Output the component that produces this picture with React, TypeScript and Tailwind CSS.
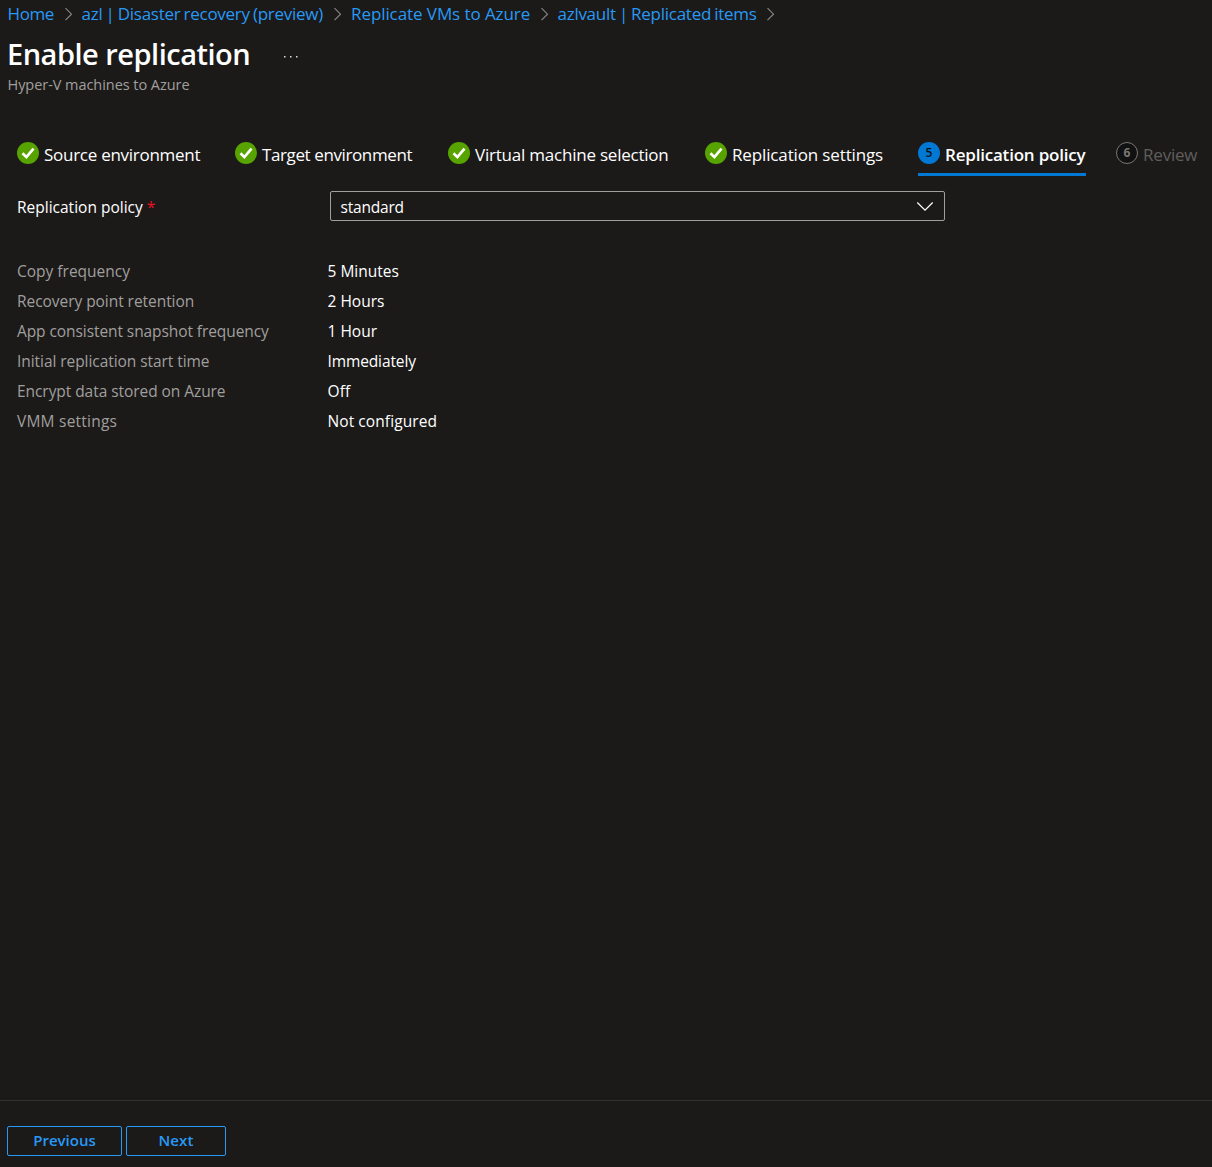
const crumbs = [
  { text: "Home", box: "w-[74px]", track: "tracking-[-0.4px]" },
  { text: "azl | Disaster recovery (preview)", box: "w-[269.5px]", track: "tracking-[-0.27px] [word-spacing:-1px]" },
  { text: "Replicate VMs to Azure", box: "w-[206.5px]", track: "tracking-[-0.08px]" },
  { text: "azlvault | Replicated items", box: "w-[226px]", track: "tracking-[-0.27px] [word-spacing:-1px]" },
];

const steps = [
  { text: "Source environment", state: "done", box: "w-[218px]", track: "tracking-[-0.27px]" },
  { text: "Target environment", state: "done", box: "w-[213px]", track: "tracking-[-0.39px]" },
  { text: "Virtual machine selection", state: "done", box: "w-[257px]", track: "tracking-[-0.22px]" },
  { text: "Replication settings", state: "done", box: "w-[213px]", track: "tracking-[-0.14px]" },
  { text: "Replication policy", state: "current", box: "w-[198px]", track: "tracking-[-0.2px]" },
  { text: "Review", state: "todo", box: "w-[90px]", track: "tracking-[-0.2px]" },
];

const details = [
  { label: "Copy frequency", value: "5 Minutes", lt: "", vt: "" },
  { label: "Recovery point retention", value: "2 Hours", lt: "tracking-[-0.05px]", vt: "" },
  { label: "App consistent snapshot frequency", value: "1 Hour", lt: "tracking-[-0.08px]", vt: "" },
  { label: "Initial replication start time", value: "Immediately", lt: "tracking-[-0.06px]", vt: "tracking-[-0.12px]" },
  { label: "Encrypt data stored on Azure", value: "Off", lt: "tracking-[-0.06px]", vt: "tracking-[0.1px]" },
  { label: "VMM settings", value: "Not configured", lt: "tracking-[0.22px]", vt: "tracking-[0.08px]" },
];

function Check() {
  return (
    <svg width="22" height="22" viewBox="0 0 22 22" className="shrink-0">
      <circle cx="11" cy="11" r="11" fill="#57a300" />
      <path d="M5.5 11.2 9.4 15.1 16.5 6.6" fill="none" stroke="#fff" strokeWidth="2.7" />
    </svg>
  );
}

function Step({ text, state, box, track }: (typeof steps)[number]) {
  const current = state === "current";
  return (
    <div className={`${box} shrink-0`}>
      <div className={`flex h-[34px] items-start ${current ? "w-[168px] border-b-[3px] border-[#0078d4]" : ""}`}>
        {state === "done" && <Check />}
        {current && (
          <span className="flex size-[22px] shrink-0 justify-center rounded-full bg-[#0078d4] text-[12px] leading-[21px] font-semibold text-[#111]">5</span>
        )}
        {state === "todo" && (
          <span className="flex size-[22px] shrink-0 justify-center rounded-full border border-[#797775] bg-[#111] text-[12px] leading-[19px] font-bold text-[#797775]">6</span>
        )}
        <span className={`ml-[5px] whitespace-nowrap text-[17px] leading-[26px] ${track} ${current ? "font-semibold" : ""} ${state === "todo" ? "text-[#605e5c]" : "text-white"}`}>
          {text}
        </span>
      </div>
    </div>
  );
}

export default function App() {
  return (
    <div className="flex h-[1167px] w-[1212px] flex-col overflow-hidden bg-[#1b1a19] font-['Open_Sans','Noto_Sans',sans-serif] text-white">
      <nav className="flex h-7 shrink-0 pl-[7.5px] text-[17px] leading-[28px] text-[#2899f5]">
        {crumbs.map((c) => (
          <div key={c.text} className={`${c.box} flex shrink-0 justify-between whitespace-nowrap`}>
            <a className={c.track}>{c.text}</a>
            <svg width="8" height="14" viewBox="0 0 8 14" className="mt-[7px] mr-[9px] shrink-0" fill="none" stroke="#8a8886" strokeWidth="1.1">
              <path d="M.5 1.2 6.5 7.2.5 13.2" />
            </svg>
          </div>
        ))}
      </nav>
      <header className="flex h-[68px] shrink-0 flex-col pl-[7px]">
        <div className="flex h-[46px] items-center">
          <h1 className="w-[276px] pt-[5px] text-[29px] leading-[40px] font-semibold tracking-[-0.5px]">Enable replication</h1>
          <svg width="16" height="4" viewBox="0 0 16 4" className="mt-[11px]" fill="#e1dfdd">
            <rect x="1" y="1" width="1.5" height="1.5" />
            <rect x="7" y="1" width="1.5" height="1.5" />
            <rect x="13" y="1" width="1.5" height="1.5" />
          </svg>
        </div>
        <p className="pl-[0.5px] text-[14.5px] leading-[22px] tracking-[-0.05px] text-[#a19f9d]">Hyper-V machines to Azure</p>
      </header>
      <div className="mt-[46px] flex shrink-0 pl-[17px]">
        {steps.map((s) => (
          <Step key={s.text} {...s} />
        ))}
      </div>
      <main className="flex-1 pl-[17px] text-[15.5px]">
        <div className="mt-[15px] flex h-[30px] items-center">
          <label className="w-[313px] pt-[2px] leading-[30px]">
            Replication policy <span className="text-[#e81123]">*</span>
          </label>
          <div className="flex h-[30px] w-[615px] items-center justify-between rounded-[2px] border border-[#a19f9d] pr-[10px] pl-[9.5px]">
            <span className="pt-[3px] tracking-[-0.2px]">standard</span>
            <svg width="18" height="11" viewBox="0 0 18 11" className="mt-px" fill="none" stroke="#fff" strokeWidth="1.2">
              <path d="M1.3 1.5 9 9.2l7.7-7.7" />
            </svg>
          </div>
        </div>
        <dl className="mt-[35px]">
          {details.map((d) => (
            <div key={d.label} className="flex h-[30px] leading-[30px]">
              <dt className={`w-[310.5px] text-[#a19f9d] ${d.lt}`}>{d.label}</dt>
              <dd className={d.vt}>{d.value}</dd>
            </div>
          ))}
        </dl>
      </main>
      <footer className="flex h-[67px] shrink-0 gap-1 border-t border-[#323130] pt-[25px] pl-[7px] text-[15px] font-semibold text-[#2899f5]">
        <button className="h-[30px] w-[115px] rounded-[2px] border border-[#2899f5] pb-[2px] leading-[26px]">Previous</button>
        <button className="h-[30px] w-[100px] rounded-[2px] border border-[#2899f5] pb-[2px] leading-[26px] tracking-[0.1px]">Next</button>
      </footer>
    </div>
  );
}
